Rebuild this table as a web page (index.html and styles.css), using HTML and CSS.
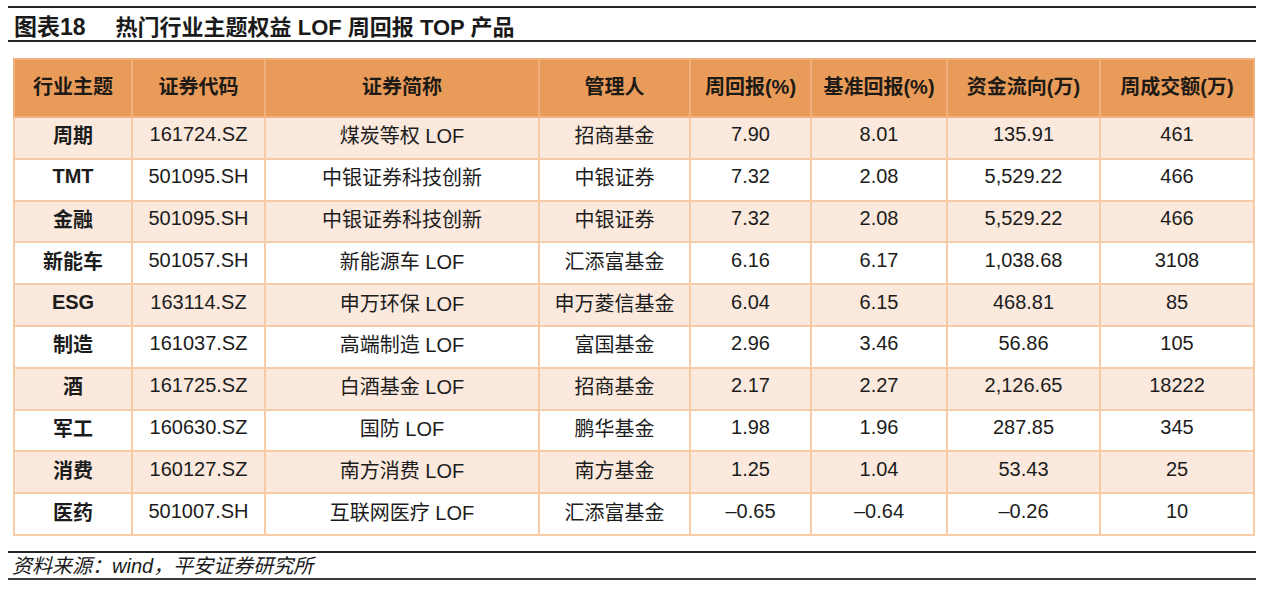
FILE: index.html
```html
<!DOCTYPE html>
<html lang="zh-CN">
<head>
<meta charset="utf-8">
<title>热门行业主题权益 LOF 周回报 TOP 产品</title>
<link rel="stylesheet" href="styles.css">
</head>
<body>
<div class="page">
  <div class="rule rule-top"></div>
  <div class="title"><span class="fig-no">图表18</span><span>热门行业主题权益 LOF 周回报 TOP 产品</span></div>
  <div class="rule"></div>
  <table class="data">
    <colgroup>
      <col class="c1"><col class="c2"><col class="c3"><col class="c4"><col class="c5"><col class="c6"><col class="c7"><col class="c8">
    </colgroup>
    <thead>
      <tr><th>行业主题</th><th>证券代码</th><th>证券简称</th><th>管理人</th><th>周回报(%)</th><th>基准回报(%)</th><th>资金流向(万)</th><th>周成交额(万)</th></tr>
    </thead>
    <tbody>
      <tr class="alt"><td class="b">周期</td><td>161724.SZ</td><td>煤炭等权 LOF</td><td>招商基金</td><td>7.90</td><td>8.01</td><td>135.91</td><td>461</td></tr>
      <tr><td class="b">TMT</td><td>501095.SH</td><td>中银证券科技创新</td><td>中银证券</td><td>7.32</td><td>2.08</td><td>5,529.22</td><td>466</td></tr>
      <tr class="alt"><td class="b">金融</td><td>501095.SH</td><td>中银证券科技创新</td><td>中银证券</td><td>7.32</td><td>2.08</td><td>5,529.22</td><td>466</td></tr>
      <tr><td class="b">新能车</td><td>501057.SH</td><td>新能源车 LOF</td><td>汇添富基金</td><td>6.16</td><td>6.17</td><td>1,038.68</td><td>3108</td></tr>
      <tr class="alt"><td class="b">ESG</td><td>163114.SZ</td><td>申万环保 LOF</td><td>申万菱信基金</td><td>6.04</td><td>6.15</td><td>468.81</td><td>85</td></tr>
      <tr><td class="b">制造</td><td>161037.SZ</td><td>高端制造 LOF</td><td>富国基金</td><td>2.96</td><td>3.46</td><td>56.86</td><td>105</td></tr>
      <tr class="alt"><td class="b">酒</td><td>161725.SZ</td><td>白酒基金 LOF</td><td>招商基金</td><td>2.17</td><td>2.27</td><td>2,126.65</td><td>18222</td></tr>
      <tr><td class="b">军工</td><td>160630.SZ</td><td>国防 LOF</td><td>鹏华基金</td><td>1.98</td><td>1.96</td><td>287.85</td><td>345</td></tr>
      <tr class="alt"><td class="b">消费</td><td>160127.SZ</td><td>南方消费 LOF</td><td>南方基金</td><td>1.25</td><td>1.04</td><td>53.43</td><td>25</td></tr>
      <tr><td class="b">医药</td><td>501007.SH</td><td>互联网医疗 LOF</td><td>汇添富基金</td><td>–0.65</td><td>–0.64</td><td>–0.26</td><td>10</td></tr>
    </tbody>
  </table>
  <div class="rule rule-foot"></div>
  <div class="source">资料来源：wind，平安证券研究所</div>
  <div class="rule rule-thin"></div>
</div>
</body>
</html>
```

FILE: styles.css
```css
html, body {
  margin: 0;
  padding: 0;
  background: #ffffff;
}

body {
  font-family: "Liberation Sans", "Noto Sans CJK SC", sans-serif;
  color: #1c1c1c;
}

.page {
  width: 1248px;
  padding: 0 8px;
}

.rule {
  border-top: 2px solid #232323;
}

.rule-top {
  margin-top: 6px;
}

.title {
  height: 32px;
  line-height: 38px;
  padding-left: 6px;
  font-size: 22px;
  font-weight: bold;
  color: #1a1a1a;
  white-space: nowrap;
}

.fig-no {
  margin-right: 30px;
  font-size: 23px;
}

.data {
  margin: 16px 0 0 5px;
  width: 1240px;
  table-layout: fixed;
  border-collapse: collapse;
  font-size: 20px;
}

.c1 { width: 118px; }
.c2 { width: 133px; }
.c3 { width: 274px; }
.c4 { width: 151px; }
.c5 { width: 121px; }
.c6 { width: 136px; }
.c7 { width: 153px; }
.c8 { width: 154px; }

.data th,
.data td {
  border: 2px solid #f6cba6;
  text-align: center;
  padding: 0 0 6px;
  white-space: nowrap;
}

.data thead tr {
  height: 58px;
}

.data th {
  background: #e99c5a;
  font-weight: bold;
  color: #1e1a16;
  border-color: #f0b17c;
  padding-bottom: 5px;
}

.data tbody tr {
  height: 41.8px;
}

.data tbody tr.alt td {
  background: #fae9dc;
}

.data td.b {
  font-weight: bold;
}

.rule-foot {
  margin-top: 15px;
}

.source {
  height: 25px;
  line-height: 26px;
  padding-left: 4px;
  font-size: 20px;
  font-style: italic;
  color: #1a1a1a;
}

.rule-thin {
  border-top: 2px solid #3a3a3a;
}
```
